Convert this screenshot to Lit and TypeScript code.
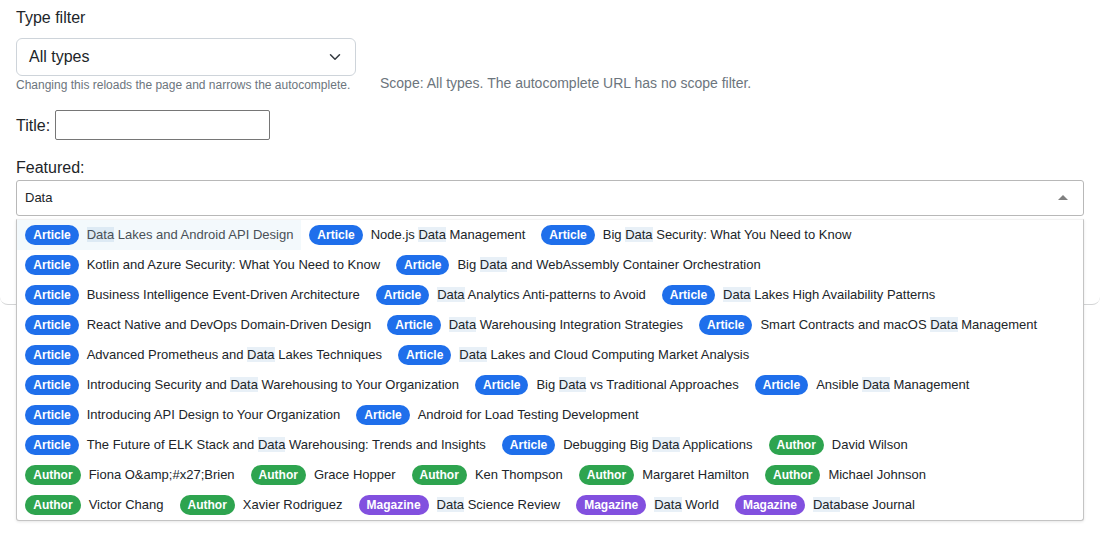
import { LitElement, html, css } from "lit";
import { customElement } from "lit/decorators.js";

type Kind = "Article" | "Author" | "Magazine";

// resultados del autocomplete, en el orden de la captura
const items: [Kind, string][] = [
  ["Article", "Data Lakes and Android API Design"],
  ["Article", "Node.js Data Management"],
  ["Article", "Big Data Security: What You Need to Know"],
  ["Article", "Kotlin and Azure Security: What You Need to Know"],
  ["Article", "Big Data and WebAssembly Container Orchestration"],
  ["Article", "Business Intelligence Event-Driven Architecture"],
  ["Article", "Data Analytics Anti-patterns to Avoid"],
  ["Article", "Data Lakes High Availability Patterns"],
  ["Article", "React Native and DevOps Domain-Driven Design"],
  ["Article", "Data Warehousing Integration Strategies"],
  ["Article", "Smart Contracts and macOS Data Management"],
  ["Article", "Advanced Prometheus and Data Lakes Techniques"],
  ["Article", "Data Lakes and Cloud Computing Market Analysis"],
  ["Article", "Introducing Security and Data Warehousing to Your Organization"],
  ["Article", "Big Data vs Traditional Approaches"],
  ["Article", "Ansible Data Management"],
  ["Article", "Introducing API Design to Your Organization"],
  ["Article", "Android for Load Testing Development"],
  ["Article", "The Future of ELK Stack and Data Warehousing: Trends and Insights"],
  ["Article", "Debugging Big Data Applications"],
  ["Author", "David Wilson"],
  ["Author", "Fiona O&amp;#x27;Brien"],
  ["Author", "Grace Hopper"],
  ["Author", "Ken Thompson"],
  ["Author", "Margaret Hamilton"],
  ["Author", "Michael Johnson"],
  ["Author", "Victor Chang"],
  ["Author", "Xavier Rodriguez"],
  ["Magazine", "Data Science Review"],
  ["Magazine", "Data World"],
  ["Magazine", "Database Journal"],
];

@customElement("app-root")
export class AppRoot extends LitElement {
  static styles = css`
    :host {
      display: block;
      height: 554px;
      font-family: "Liberation Sans", Arial, sans-serif;
      font-size: 16px;
      color: #212529;
    }

    .card {
      position: relative;
      height: 305px;
      box-sizing: border-box;
      padding: 9px 16px 0;
      border-bottom: 1px solid #d3d4d5;
      border-radius: 0 0 8px 8px;
    }

    .label {
      display: block;
      line-height: 18px;
      margin-bottom: 11px;
    }

    .filter-row {
      display: flex;
      align-items: flex-start;
      gap: 24px;
    }

    .filter {
      width: 340px;
    }

    .select {
      height: 38px;
      box-sizing: border-box;
      border: 1px solid #ced4da;
      border-radius: 6px;
      padding: 0 12px;
      display: flex;
      align-items: center;
      justify-content: space-between;
    }

    .select svg {
      width: 16px;
      height: 12px;
    }

    .help {
      font-size: 12px;
      line-height: 18px;
      color: #6c757d;
    }

    .scope {
      font-size: 14px;
      line-height: 18px;
      color: #6c757d;
      margin-top: 36px;
    }

    .title-row {
      display: flex;
      align-items: center;
      gap: 5px;
      margin-top: 16px;
    }

    .title-row span {
      padding-top: 2px;
    }

    .title-row .box {
      width: 215px;
      height: 30px;
      box-sizing: border-box;
      border: 1px solid #767676;
      border-radius: 2px;
    }

    .featured {
      display: block;
      line-height: 18px;
      margin-top: 19px;
      margin-bottom: 3px;
    }

    .combo {
      height: 36px;
      box-sizing: border-box;
      border: 1px solid #b8b8b8;
      border-radius: 3px;
      padding: 0 15px 2px 8px;
      display: flex;
      align-items: center;
      justify-content: space-between;
      font-size: 13px;
    }

    .caret {
      width: 0;
      height: 0;
      border-left: 5px solid transparent;
      border-right: 5px solid transparent;
      border-bottom: 5px solid #808080;
    }

    /* el desplegable queda encima de la tarjeta */
    .dropdown {
      position: absolute;
      left: 16px;
      top: 219px;
      width: 1068px;
      height: 302px;
      box-sizing: border-box;
      background: #fff;
      border: 1px solid #c4c4c4;
      border-top-color: #f2f2f2;
      border-radius: 0 0 3px 3px;
      box-shadow: 0 1px 3px rgba(0, 0, 0, 0.1);
      display: flex;
      flex-wrap: wrap;
      align-content: flex-start;
      font-size: 13px;
    }

    .item {
      height: 30px;
      box-sizing: border-box;
      padding: 5px 7.7px 0 8.3px;
      display: flex;
      align-items: baseline;
      gap: 8px;
      white-space: nowrap;
    }

    .item.active {
      background: #f3f9fc;
      color: #495057;
    }

    .badge {
      height: 20px;
      line-height: 20px;
      padding: 0 8px;
      border-radius: 10px;
      font-size: 12px;
      font-weight: 700;
      color: #fff;
    }

    .Article {
      background: #1f6feb;
    }

    .Author {
      background: #2ea44f;
    }

    .Magazine {
      background: #8250df;
    }

    mark {
      background: rgba(0, 90, 170, 0.09);
      color: inherit;
    }
  `;

  // resalta la coincidencia "Data" dentro del título
  private _highlight(text: string) {
    const i = text.indexOf("Data");
    if (i < 0) return text;
    return html`${text.slice(0, i)}<mark>Data</mark>${text.slice(i + 4)}`;
  }

  render() {
    return html`
      <div class="card">
        <span class="label">Type filter</span>
        <div class="filter-row">
          <div class="filter">
            <div class="select">
              All types
              <svg viewBox="0 0 16 16" fill="none" stroke="#343a40" stroke-width="2" stroke-linecap="round" stroke-linejoin="round">
                <path d="m2 5 6 6 6-6"></path>
              </svg>
            </div>
            <div class="help">Changing this reloads the page and narrows the autocomplete.</div>
          </div>
          <div class="scope">Scope: All types. The autocomplete URL has no scope filter.</div>
        </div>
        <div class="title-row">
          <span>Title:</span>
          <div class="box"></div>
        </div>
        <span class="featured">Featured:</span>
        <div class="combo">
          <span>Data</span>
          <span class="caret"></span>
        </div>
        <div class="dropdown">
          ${items.map(
            ([kind, text], i) => html`
              <div class="item ${i === 0 ? "active" : ""}">
                <span class="badge ${kind}">${kind}</span>
                <span>${this._highlight(text)}</span>
              </div>
            `
          )}
        </div>
      </div>
    `;
  }
}
